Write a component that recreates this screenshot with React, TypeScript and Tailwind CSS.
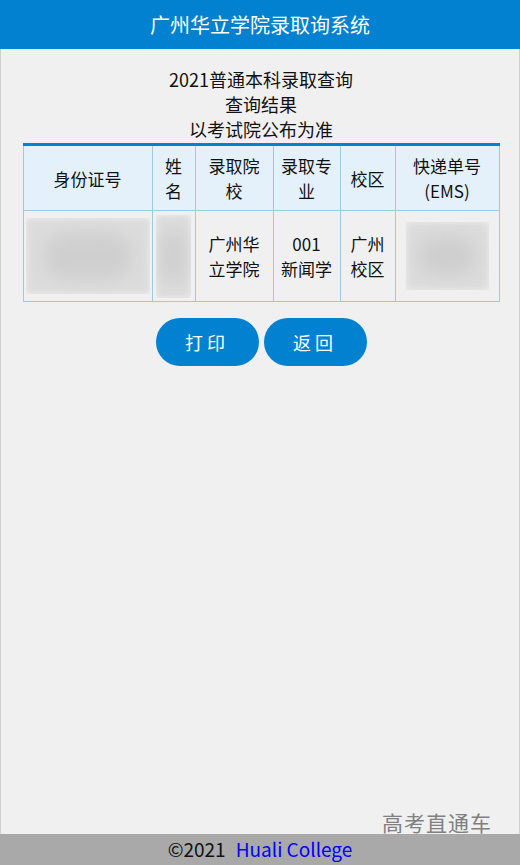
import React from "react";

const font = { fontFamily: '"Noto Sans CJK SC", "Noto Sans", sans-serif' };

function Blur({ className }: { className: string }) {
  return (
    <div className={"relative overflow-hidden " + className}>
      <div className="absolute inset-0 bg-[#dcdcdc] blur-[3px]" />
      <div className="absolute left-[15%] right-[15%] top-[20%] bottom-[20%] rounded-full bg-[#cfcfcf] blur-[8px]" />
    </div>
  );
}

export default function App() {
  const th =
    "border border-[#9ccbe0] bg-[#e4f1fa] text-[17px] leading-[25px] font-normal text-[#111] text-center align-middle px-[7px]";
  const td =
    "border border-[#9ccbe0] text-[17px] leading-[25px] text-[#111] text-center align-middle px-[7px]";
  return (
    <div
      style={font}
      className="h-[865px] w-[520px] bg-[#f0f0f0] flex flex-col border-x border-[#d0d0d0] relative"
    >
      <div className="h-[49px] bg-[#0181cf] flex items-center justify-center text-white text-[20px] -mx-px">
        广州华立学院录取询系统
      </div>
      <div className="flex-1 flex flex-col items-center pl-[2px]">
        <div className="mt-[18px] text-[18px] leading-[25px] text-[#111] text-center">
          <div>2021普通本科录取查询</div>
          <div>查询结果</div>
          <div>以考试院公布为准</div>
        </div>
        <table className="mt-[1px] w-[476px] table-fixed border-collapse border-t-[3px] border-t-[#0181cf]">
          <colgroup>
            <col className="w-[129px]" />
            <col className="w-[43px]" />
            <col className="w-[78px]" />
            <col className="w-[67px]" />
            <col className="w-[55px]" />
            <col className="w-[104px]" />
          </colgroup>
          <thead>
            <tr className="h-[66px]">
              <th className={th + " border-t-0"}>身份证号</th>
              <th className={th + " border-t-0"}>姓名</th>
              <th className={th + " border-t-0"}>录取院校</th>
              <th className={th + " border-t-0"}>录取专业</th>
              <th className={th + " border-t-0"}>校区</th>
              <th className={th + " border-t-0"}>
                快递单号
                <br />
                (EMS)
              </th>
            </tr>
          </thead>
          <tbody>
            <tr className="h-[91px]">
              <td className="border border-[#9ccbe0] p-0 align-middle">
                <div className="flex justify-center">
                  <Blur className="w-[124px] h-[76px]" />
                </div>
              </td>
              <td className="border border-[#9ccbe0] p-0 align-middle">
                <div className="flex justify-center">
                  <Blur className="w-[35px] h-[83px]" />
                </div>
              </td>
              <td className={td}>广州华立学院</td>
              <td className={td}>
                001
                <br />
                新闻学
              </td>
              <td className={td}>广州校区</td>
              <td className="border border-[#9ccbe0] p-0 align-middle">
                <div className="flex justify-center">
                  <Blur className="w-[83px] h-[68px]" />
                </div>
              </td>
            </tr>
          </tbody>
        </table>
        <div className="mt-[16px] flex gap-[5px]">
          <button className="w-[103px] h-[48px] rounded-full bg-[#0181cf] text-white text-[18px] tracking-[4px]">
            打印
          </button>
          <button className="w-[103px] h-[48px] rounded-full bg-[#0181cf] text-white text-[18px] tracking-[4px]">
            返回
          </button>
        </div>
      </div>
      <div className="h-[31px] bg-[#a9a9a9] -mx-px flex items-center justify-center text-[19px]">
        <span className="text-[#111]">©2021</span>
        <span className="ml-[10px] text-[#0000ff]">Huali College</span>
      </div>
      <div className="absolute right-[27px] bottom-[27px] text-[21px] text-[#808080] tracking-[1px]">
        高考直通车
      </div>
    </div>
  );
}
